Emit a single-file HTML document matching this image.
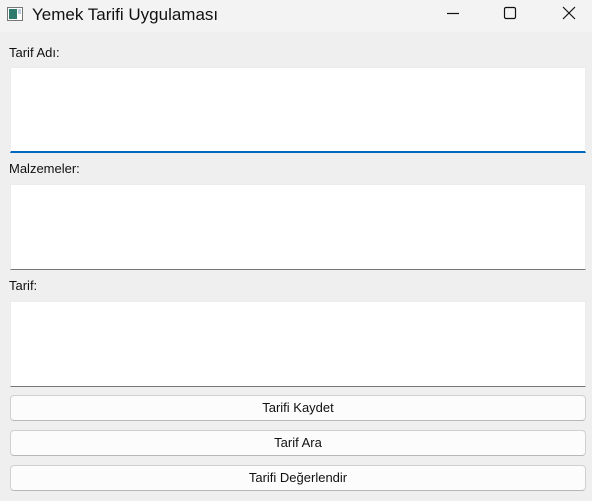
<!DOCTYPE html>
<html><head><meta charset="utf-8"><style>
*{margin:0;padding:0;box-sizing:border-box}
body{width:592px;height:501px;background:#efefef;font-family:"Liberation Sans","DejaVu Sans",sans-serif;position:relative;overflow:hidden}
.tb{position:absolute;left:0;top:0;width:592px;height:32px;background:#f3f3f3}
.tb .t{position:absolute;left:32px;top:5px;font-size:17px;color:#111}
.lbl{position:absolute;left:9px;font-size:13px;color:#111}
.ta{position:absolute;left:10px;width:576px;height:86px;background:#fff;border:1px solid #ececec;border-bottom:1px solid #777}
.ta.f{border-bottom:2px solid #0067c0}
.btn{position:absolute;left:10px;width:576px;height:26px;background:#fcfcfc;border:1px solid #d0d0d0;border-bottom-color:#b8b8b8;border-radius:4px;font-size:13px;color:#111;text-align:center;line-height:24px}
</style></head><body>
<div class="tb">
<svg style="position:absolute;left:7px;top:7px" width="16" height="14"><rect x="0.5" y="0.5" width="15" height="13" fill="#fff" stroke="#777"/><rect x="2" y="2" width="8" height="10" fill="#2f7a6e"/><rect x="11" y="2" width="3" height="5" fill="#bcd"/></svg>
<div class="t">Yemek Tarifi Uygulaması</div>
<svg style="position:absolute;left:445px;top:6px" width="135" height="16">
<line x1="2" y1="7.5" x2="14" y2="7.5" stroke="#111" stroke-width="1.2"/>
<rect x="59.5" y="1.5" width="11" height="11" rx="1.5" fill="none" stroke="#111" stroke-width="1.2"/>
<path d="M118 1 L130 13 M130 1 L118 13" stroke="#111" stroke-width="1.2"/>
</svg>
</div>
<div class="lbl" style="top:45px">Tarif Adı:</div>
<div class="ta f" style="top:67px"></div>
<div class="lbl" style="top:161px">Malzemeler:</div>
<div class="ta" style="top:184px"></div>
<div class="lbl" style="top:278px">Tarif:</div>
<div class="ta" style="top:301px"></div>
<div class="btn" style="top:395px">Tarifi Kaydet</div>
<div class="btn" style="top:430px">Tarif Ara</div>
<div class="btn" style="top:465px">Tarifi Değerlendir</div>
</body></html>
